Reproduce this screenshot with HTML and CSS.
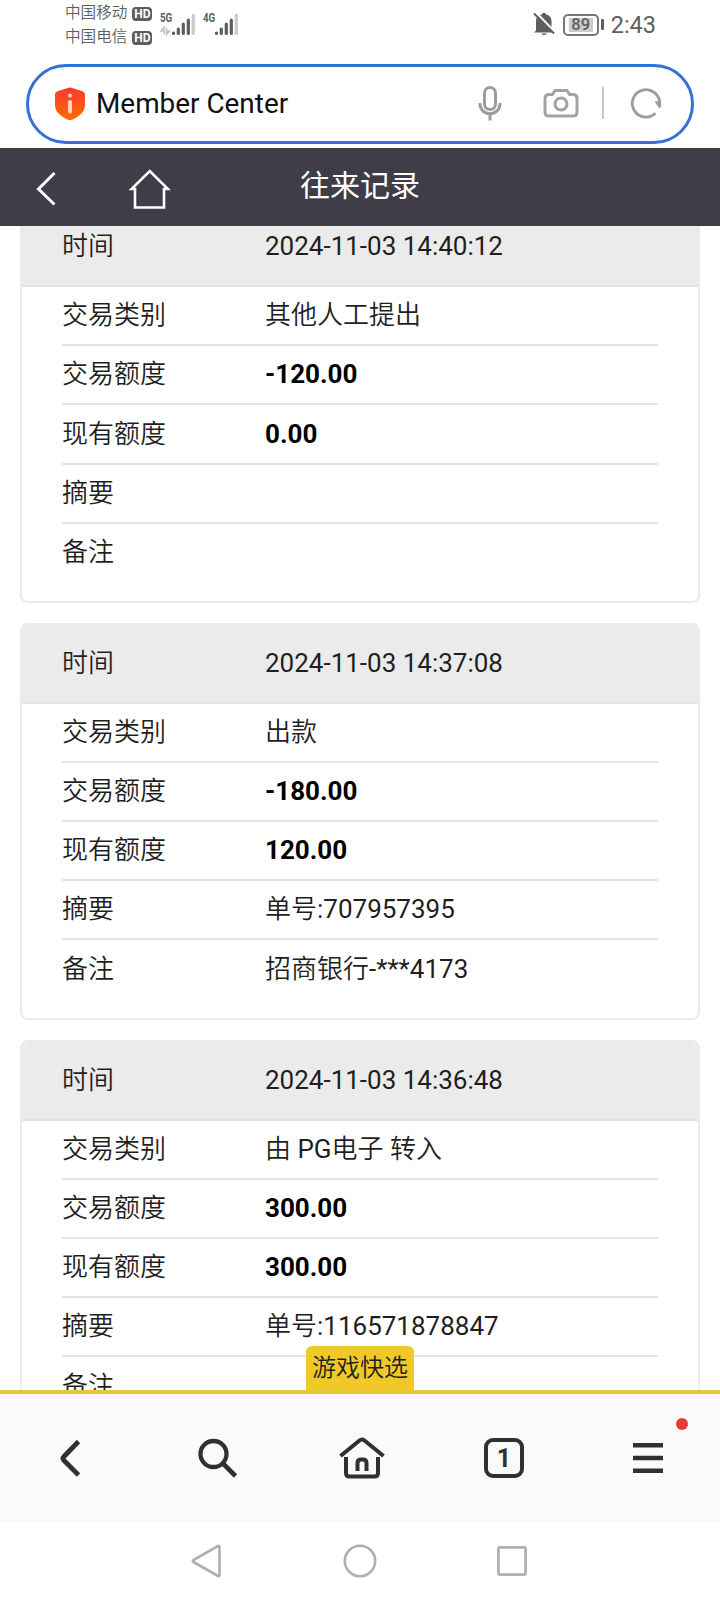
FILE: index.html
```html
<!DOCTYPE html>
<html lang="zh-CN">
<head>
<meta charset="utf-8">
<meta name="viewport" content="width=device-width, initial-scale=1">
<title>往来记录</title>
<link rel="stylesheet" href="styles.css">
</head>
<body>
<div class="screen">
  <div class="status">
    <div class="carriers">
      <div class="carrier">中国移动<span class="hd">HD</span></div>
      <div class="carrier">中国电信<span class="hd">HD</span></div>
    </div>
    <div class="signal">
      <span class="net">5G</span>
      <svg width="36" height="23" viewBox="0 0 36 23"><g stroke="#c4c4c4" stroke-width="1.6" fill="none"><path d="M4 21.500v-7l-3 3.500h3M6.500 14.500v7l3-3.500h-3"/></g><g stroke="#5e5e5e" stroke-width="3.200" stroke-linecap="round"><path d="M13.500 20v.4M18.300 16v4.400M23.300 11v9.400M28.300 7v13.400"/><path stroke="#cbcbcb" d="M33.300 2v18.400"/></g></svg>
    </div>
    <div class="signal second">
      <span class="net">4G</span>
      <svg width="36" height="23" viewBox="0 0 36 23"><g stroke="#5e5e5e" stroke-width="3.200" stroke-linecap="round"><path d="M13.500 20v.4M18.300 16v4.400M23.300 11v9.400M28.300 7v13.400"/><path stroke="#cbcbcb" d="M33.300 2v18.400"/></g></svg>
    </div>
    <div class="status-right">
      <svg class="bell" width="22" height="24" viewBox="0 0 22 24"><path fill="#5e5e5e" d="M3 18.500V9.500C3 5 5.500 3 9 2.500V2q2-2.500 4 0v.5C16.500 3 18.500 5.500 18.500 9.500v7l2 4H1zM8 21.500h6q-3 3-6 0z"/><path stroke="#fff" stroke-width="2.200" d="M3 .5l18.500 19"/><path stroke="#5e5e5e" stroke-width="2" d="M1 1.500l20 20"/></svg>
      <span class="battery"><span class="charge">89</span></span><span class="battery-tip"></span>
      <span class="clock">2:43</span>
    </div>
  </div>

  <div class="address">
    <svg width="32" height="34" viewBox="0 0 32 34"><defs><linearGradient id="shield" x1="0" y1="0" x2="0" y2="1"><stop offset="0" stop-color="#fa3a30"/><stop offset="1" stop-color="#ff6a00"/></linearGradient></defs><path fill="url(#shield)" d="M14.500.8q1.500-.7 3 0l11 3.500q2.500.8 2.500 3.200v10.500c0 7-6 11.500-13 14.700q-2 .8-4 0C7 29.500 1 25 1 18V7.500Q1 5.100 3.500 4.300z"/><g stroke="#ffd3c8" stroke-width="4" stroke-linecap="round"><path d="M16 8.500v.1M16 15v9.500"/></g></svg>
    <span class="address-title">Member Center</span>
    <svg class="mic" width="24" height="36" viewBox="0 0 24 36" fill="none" stroke="#9c9c9c" stroke-width="3"><rect x="6.500" y="2.500" width="11" height="22" rx="5.500"/><path d="M2 18v1a10 9.800 0 0 0 20 0v-1M12 29v6.500"/></svg>
    <svg class="camera" width="36" height="30" viewBox="0 0 36 30" fill="none" stroke="#a3a3a3" stroke-width="3"><path d="M12 2.500h12l2.500 4H30q4 0 4 4V24q0 4-4 4H6q-4 0-4-4V10.500q0-4 4-4h3.500z" stroke-linejoin="round"/><circle cx="18" cy="16" r="6"/></svg>
    <span class="divider"></span>
    <svg width="32" height="32" viewBox="0 0 32 32"><path d="M25.500 26.200A13.700 13.700 0 1 1 29.700 16.500" fill="none" stroke="#9c9c9c" stroke-width="2.800"/><path d="M24.500 14.500L31 14v5.500l-1.500 2z" fill="#9c9c9c"/></svg>
  </div>

  <div class="titlebar">
    <svg class="back" width="22" height="36" viewBox="0 0 22 36" fill="none" stroke="#fff" stroke-width="3"><path d="M18.500 2L2.500 18l16 15.500"/></svg>
    <svg class="home" width="42" height="42" viewBox="0 0 42 42" fill="none" stroke="#fff" stroke-width="2.600"><path d="M6 21H2.500L20.800 3 39 21h-4v18.500H6z"/></svg>
    <h1 class="title">往来记录</h1>
  </div>

  <div class="viewport">
    <div class="records">
      <div class="card">
        <div class="card-head"><span class="label">时间</span><span>2024-11-03 14:40:12</span></div>
        <div class="card-body">
          <div class="row"><span class="label">交易类别</span><span class="cjk">其他人工提出</span></div>
          <div class="row"><span class="label">交易额度</span><b>-120.00</b></div>
          <div class="row"><span class="label">现有额度</span><b>0.00</b></div>
          <div class="row"><span class="label">摘要</span><span></span></div>
          <div class="row"><span class="label">备注</span><span></span></div>
        </div>
      </div>
      <div class="card">
        <div class="card-head"><span class="label">时间</span><span>2024-11-03 14:37:08</span></div>
        <div class="card-body">
          <div class="row"><span class="label">交易类别</span><span class="cjk">出款</span></div>
          <div class="row"><span class="label">交易额度</span><b>-180.00</b></div>
          <div class="row"><span class="label">现有额度</span><b>120.00</b></div>
          <div class="row"><span class="label">摘要</span><span><span class="cjk">单号</span>:707957395</span></div>
          <div class="row"><span class="label">备注</span><span><span class="cjk">招商银行</span>-***4173</span></div>
        </div>
      </div>
      <div class="card">
        <div class="card-head"><span class="label">时间</span><span>2024-11-03 14:36:48</span></div>
        <div class="card-body">
          <div class="row"><span class="label">交易类别</span><span><span class="cjk">由</span> PG<span class="cjk">电子</span> <span class="cjk">转入</span></span></div>
          <div class="row"><span class="label">交易额度</span><b>300.00</b></div>
          <div class="row"><span class="label">现有额度</span><b>300.00</b></div>
          <div class="row"><span class="label">摘要</span><span><span class="cjk">单号</span>:116571878847</span></div>
          <div class="row"><span class="label">备注</span><span></span></div>
        </div>
      </div>
    </div>
    <div class="quick">游戏快选</div>
  </div>

  <div class="toolbar">
    <svg class="nav-back" width="40" height="44" viewBox="0 0 40 44" fill="none" stroke="#303030" stroke-width="4.800"><path d="M28.500 5.500L14 20.500q-2 2 0 4L28.500 39"/></svg>
    <svg class="nav-shift" width="42" height="44" viewBox="0 0 42 44" fill="none" stroke="#303030" stroke-width="4.300"><circle cx="16.500" cy="18" r="13"/><path d="M25.500 27l13 13" stroke-width="4.600"/></svg>
    <svg class="nav-shift" width="46" height="44" viewBox="0 0 46 44" fill="none" stroke="#303030" stroke-width="4"><path d="M1.500 20L20.500 4.500q2.500-2 5 0L44.500 20M7 21v16q0 3.500 3.500 3.500h25q3.500 0 3.500-3.500V21M18.500 35v-8q0-3.500 3.500-3.500h2q3.500 0 3.500 3.500v8"/></svg>
    <span class="tabs">1</span>
    <span class="menu"><svg width="30" height="32" viewBox="0 0 30 32" fill="#303030"><path d="M0 1h30v4.400H0zM0 13.800h30v4.400H0zM0 26.500h30v4.400H0z"/></svg><i class="dot"></i></span>
  </div>

  <div class="sysnav">
    <svg width="30" height="34" viewBox="0 0 30 34" fill="none" stroke="#b0b0b0" stroke-width="2.600" stroke-linejoin="round"><path d="M27 2q1.500-.5 1.500 1v28q0 1.500-1.500 1L2.500 18q-1.500-1 0-2z"/></svg>
    <svg class="circle" width="34" height="34" viewBox="0 0 34 34" fill="none" stroke="#b0b0b0" stroke-width="2.600"><circle cx="17" cy="17" r="15.200"/></svg>
    <svg width="30" height="30" viewBox="0 0 30 30" fill="none" stroke="#b0b0b0" stroke-width="2.800"><rect x="1.400" y="1.400" width="27.200" height="27.200" rx="1.500"/></svg>
  </div>
</div>
</body>
</html>
```
FILE: styles.css
```css
* { box-sizing: border-box; }
body {
  margin: 0;
  background: #fff;
  color: #1f1f1f;
  font-family: Roboto, "Noto Sans CJK SC", sans-serif;
}
svg { display: block; flex: none; }
.screen { display: flex; flex-direction: column; width: 720px; height: 1600px; overflow: hidden; }

.status { display: flex; align-items: flex-start; height: 64px; padding: 0 64px 0 65px; color: #5e5e5e; }
.carriers { width: 95px; padding-top: 1px; }
.carrier { display: flex; align-items: center; height: 24px; font-size: 15.6px; font-weight: 350; line-height: 24px; white-space: nowrap; }
.hd { width: 20px; height: 14px; margin-left: 5px; margin-top: 1px; border-radius: 4px; background: #5e5e5e; color: #fff; font-size: 12px; font-weight: 700; line-height: 14px; text-align: center; }
.signal { position: relative; width: 36px; padding-top: 13px; }
.second { margin-left: 7px; }
.net { position: absolute; left: 0; top: 11px; font-size: 13px; font-weight: 700; line-height: 14px; transform: scaleX(.75); transform-origin: left; }
.status-right { display: flex; align-items: center; height: 49px; margin-left: auto; }
.bell { margin-top: -2px; }
.battery { width: 36px; height: 22px; margin-left: 8px; padding: 2px 3px; border: 2px solid #777; border-radius: 5px; }
.charge { display: block; width: 24px; margin-left: 1px; background: #ccc; font-size: 16.500px; font-weight: 500; line-height: 14px; text-align: center; }
.battery-tip { width: 3px; height: 11px; margin-left: 2px; border-radius: 1px; background: #5e5e5e; }
.clock { margin-left: 7px; padding-top: 2px; font-size: 23.500px; line-height: 47px; }

.address { display: flex; align-items: center; width: 668px; height: 80px; margin-left: 26px; padding: 0 29px 2px 23px; border: 3px solid #3670d2; border-radius: 40px; }
.address > svg:first-child { margin-left: 2px; margin-top: 2px; }
.address-title { margin: 2px 0 0 10px; color: #111; font-size: 27.900px; line-height: 40px; }
.mic { margin-left: auto; }
.camera { margin-left: 41px; }
.divider { width: 2px; height: 32px; margin: 0 26px 0 23px; background: #c8c8c8; }

.titlebar { display: grid; grid-template-columns: 89px 130px 1fr; align-items: center; height: 78px; margin-top: 4px; padding-left: 36px; background: #3e3d48; color: #fff; }
.home { margin-left: 4px; margin-top: 4px; }
.back { margin-top: 4px; }
.title { margin: 0 0 3px 45px; font-size: 30px; font-weight: 400; line-height: 44px; }

.viewport { position: relative; height: 1164px; flex: none; overflow: hidden; }
.records { display: flex; flex-direction: column; gap: 20px; margin-top: -20px; padding: 0 20px; font-size: 26px; line-height: 38px; }
.card { flex: none; height: 397px; border: 2px solid #ebebeb; border-radius: 8px; overflow: hidden; }
.card-head, .row { display: grid; grid-template-columns: 203px 1fr; align-items: center; }
.card-head { height: 79px; padding: 0 40px 1px; border-bottom: 2px solid #e3e3e3; background: #ebebeb; }
.card-body { margin: 0 40px; }
.row { height: 59px; padding-bottom: 1px; border-bottom: 2px solid #e3e3e3; }
.card:first-child .row:nth-child(3) { height: 60px; padding-bottom: 0; }
.row:last-child { border-bottom: 0; padding-bottom: 2px; }
.card:first-child .row:last-child { padding-bottom: 3px; }
.label, .cjk { font-weight: 350; }
.row b { color: #000; font-weight: 700; }
.quick { position: absolute; left: 306px; bottom: 0; width: 108px; height: 44px; border-radius: 6px 6px 0 0; background: #f0c828; font-size: 24px; font-weight: 350; line-height: 44px; text-align: center; }

.toolbar { display: grid; grid-template-columns: 144px 144px 144px 144px 144px; align-items: center; justify-items: center; flex: none; height: 132px; border-top: 4px solid #e5c63f; background: #fafafa; color: #303030; }
.nav-back { margin-right: 4px; }
.nav-shift { margin-left: 4px; }
.tabs { width: 40px; height: 40px; border: 4px solid #303030; border-radius: 9px; font: 700 25px/33px Roboto, sans-serif; text-align: center; }
.menu { position: relative; }
.dot { position: absolute; left: 43px; top: -24px; width: 12px; height: 12px; border-radius: 50%; background: #e53b35; }

.sysnav { display: flex; align-items: center; justify-content: center; gap: 121px; height: 78px; padding-right: 2px; }
.circle { margin: 0 -1px 0 1px; }
```
